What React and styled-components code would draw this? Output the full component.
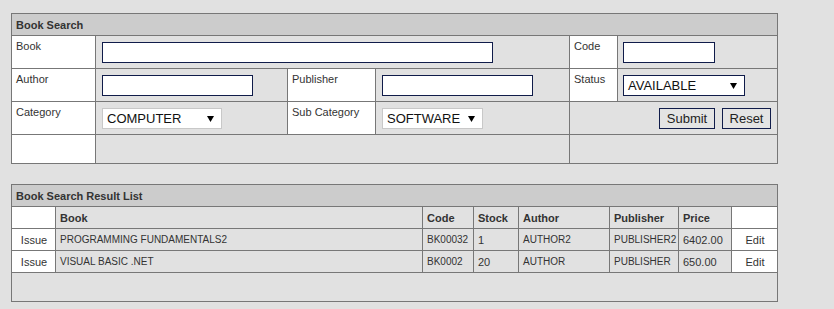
import React from "react";
import styled, { createGlobalStyle } from "styled-components";

const GlobalStyle = createGlobalStyle`
  html, body { margin: 0; padding: 0; background: #e1e1e1; }
  body { font-family: "Liberation Sans", Arial, sans-serif; }
`;

const Page = styled.div`
  padding: 13px 0 0 11px;
  display: flex;
  flex-direction: column;
  gap: 20px;
  align-items: flex-start;
`;

const Grid = styled.div`
  display: grid;
  grid-template-columns: ${(p) => p.$cols};
  grid-template-rows: ${(p) => p.$rows};
  gap: 1px;
  padding: 1px;
  background: #777;
  width: max-content;
`;

const Caption = styled.div`
  grid-column: 1 / -1;
  background: #cccccc;
  color: #333;
  font-weight: bold;
  font-size: 11px;
  display: flex;
  align-items: center;
  padding: 0 4px;
`;

const Label = styled.div`
  background: #fff;
  color: #333;
  font-size: 11px;
  line-height: 14px;
  padding: 3px 4px;
`;

const Field = styled.div`
  background: #e1e1e1;
  grid-column: span ${(p) => p.$span || 1};
  padding: 6px ${(p) => p.$padX || 6}px;
  display: flex;
  align-items: flex-start;
`;

const ButtonCell = styled(Field)`
  justify-content: flex-end;
  gap: 7px;
`;

const Blank = styled.div`
  background: ${(p) => (p.$white ? "#fff" : "#e1e1e1")};
  grid-column: span ${(p) => p.$span || 1};
`;

const TextInput = styled.input`
  width: ${(p) => p.$w}px;
  height: 21px;
  box-sizing: border-box;
  border: 1px solid #101c4a;
  background: #fff;
  padding: 0 3px;
  margin: 0;
  font: 13px "Liberation Sans", Arial, sans-serif;
  outline: none;
`;

const SelectBox = styled.div`
  width: ${(p) => p.$w}px;
  height: 21px;
  box-sizing: border-box;
  border: 1px solid ${(p) => (p.$dark ? "#101c4a" : "#c8c8c8")};
  background: #fff;
  display: flex;
  align-items: center;
  justify-content: space-between;
  padding: 0 7px 0 4px;
  font-size: 13px;
  color: #111;
`;

const Arrow = styled.svg`
  width: 7px;
  height: 6px;
  flex: none;
`;

const Button = styled.button`
  height: 21px;
  box-sizing: border-box;
  border: 1px solid #101c4a;
  background: #e4e4e4;
  color: #222;
  font: 13px "Liberation Sans", Arial, sans-serif;
  padding: 0 5px;
  margin: 0;
  width: ${(p) => p.$w}px;
`;

const Head = styled.div`
  background: ${(p) => (p.$white ? "#fff" : "#e1e1e1")};
  color: #333;
  font-weight: bold;
  font-size: 11px;
  display: flex;
  align-items: center;
  padding: 0 4px;
`;

const Data = styled.div`
  background: ${(p) => (p.$white ? "#fff" : "#e1e1e1")};
  color: #333;
  font-size: ${(p) => (p.$caps ? "10px" : "11px")};
  display: flex;
  align-items: center;
  justify-content: ${(p) => (p.$center ? "center" : "flex-start")};
  padding: 0 3px 0 4px;
  white-space: nowrap;
  overflow: hidden;
`;

function Select({ w, dark, value }) {
  return (
    <SelectBox $w={w} $dark={dark}>
      <span>{value}</span>
      <Arrow viewBox="0 0 7 6">
        <path d="M0 0 H7 L3.5 6 Z" fill="#000" />
      </Arrow>
    </SelectBox>
  );
}

const rows = [
  ["PROGRAMMING FUNDAMENTALS2", "BK00032", "1", "AUTHOR2", "PUBLISHER2", "6402.00"],
  ["VISUAL BASIC .NET", "BK0002", "20", "AUTHOR", "PUBLISHER", "650.00"],
];

const capsCols = [true, true, false, true, true, false];

export default function App() {
  return (
    <>
      <GlobalStyle />
      <Page>
        <Grid $cols="83px 191px 87px 193px 47px 159px" $rows="21px 32px 32px 32px 28px">
          <Caption>Book Search</Caption>

          <Label>Book</Label>
          <Field $span={3}>
            <TextInput $w={391} />
          </Field>
          <Label>Code</Label>
          <Field $padX={5}>
            <TextInput $w={92} />
          </Field>

          <Label>Author</Label>
          <Field>
            <TextInput $w={151} />
          </Field>
          <Label>Publisher</Label>
          <Field>
            <TextInput $w={151} />
          </Field>
          <Label>Status</Label>
          <Field $padX={5}>
            <Select w={122} dark value="AVAILABLE" />
          </Field>

          <Label>Category</Label>
          <Field>
            <Select w={120} value="COMPUTER" />
          </Field>
          <Label>Sub Category</Label>
          <Field>
            <Select w={101} value="SOFTWARE" />
          </Field>
          <ButtonCell $span={2}>
            <Button $w={56}>Submit</Button>
            <Button $w={49}>Reset</Button>
          </ButtonCell>

          <Blank $white />
          <Blank $span={3} />
          <Blank $span={2} />
        </Grid>

        <Grid $cols="43px 366px 50px 44px 90px 68px 52px 45px" $rows="21px 21px 21px 21px 28px">
          <Caption>Book Search Result List</Caption>
          <Head $white />
          <Head>Book</Head>
          <Head>Code</Head>
          <Head>Stock</Head>
          <Head>Author</Head>
          <Head>Publisher</Head>
          <Head>Price</Head>
          <Head $white />
          {rows.map((r) => (
            <React.Fragment key={r[1]}>
              <Data $white $center>Issue</Data>
              {r.map((c, i) => (
                <Data key={i} $caps={capsCols[i]}>{c}</Data>
              ))}
              <Data $white $center>Edit</Data>
            </React.Fragment>
          ))}
          <Blank $span={8} />
        </Grid>
      </Page>
    </>
  );
}
